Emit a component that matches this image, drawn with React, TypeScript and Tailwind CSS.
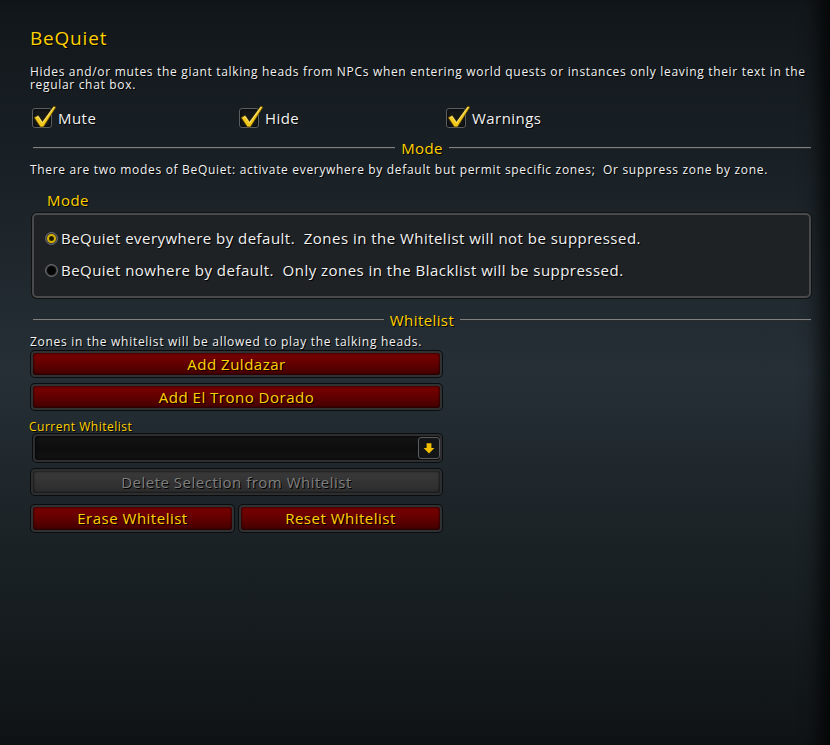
const body = { fontFamily: '"Open Sans", "DejaVu Sans", sans-serif' };
const shadow = '[text-shadow:1px_1px_0_#000]';

function Check() {
  return (
    <span className="relative inline-block w-[20px] h-[20px] rounded-[3px] border border-[#5b5e60] bg-[#141618] shadow-[inset_0_0_3px_#000]">
      <svg viewBox="0 0 24 24" className="absolute -left-[1px] -top-[5px] w-[25px] h-[25px]">
        <path d="M2 13 L6 11 L10 17 L21 2 L23 3 L11 22 L8 22 Z" fill="#f2c81a" stroke="#5a4300" strokeWidth="0.8" />
        <path d="M4 13 L6 12 L10 18 L21 3" fill="none" stroke="#fff0a0" strokeWidth="0.8" />
      </svg>
    </span>
  );
}

function Radio({ on }: { on?: boolean }) {
  return (
    <span className="inline-flex items-center justify-center w-[13px] h-[13px] rounded-full bg-[#3b3d3f] border border-[#6a6c6e]">
      {on ? (
        <span className="w-[9px] h-[9px] rounded-full border-[2px] border-[#d8b400] bg-[#2a2400] flex items-center justify-center">
          <span className="w-[3px] h-[3px] rounded-full bg-[#1a1600]" />
        </span>
      ) : (
        <span className="w-[9px] h-[9px] rounded-full bg-[#050505]" />
      )}
    </span>
  );
}

function Divider({ label }: { label: string }) {
  return (
    <div className="flex items-center h-[18px] ml-[3px] w-[778px] gap-[6px]">
      <div className="flex-1 h-[2px] bg-[#808080] border-b border-[#2a2a2a]" />
      <span className={`text-[15px] text-[#ffd100] leading-[18px] tracking-[0.4px] ${shadow}`}>{label}</span>
      <div className="flex-1 h-[2px] bg-[#808080] border-b border-[#2a2a2a]" />
    </div>
  );
}

function RedButton({ label, className }: { label: string; className?: string }) {
  return (
    <div className={`h-[26px] rounded-[4px] bg-[#2f3133] p-[2px] shadow-[0_0_0_1px_#0b0c0d] ${className ?? ''}`}>
      <div className="h-full rounded-[3px] bg-gradient-to-b from-[#7a0000] via-[#620000] to-[#420000] shadow-[inset_0_0_3px_#000] flex items-center justify-center">
        <span className={`text-[15px] text-[#ffd100] tracking-[0.5px] ${shadow}`}>{label}</span>
      </div>
    </div>
  );
}

export default function App() {
  return (
    <div
      style={body}
      className="w-[830px] h-[745px] overflow-hidden bg-gradient-to-b from-[#11161a] via-[#252f35] to-[#0f1315] shadow-[inset_-22px_0_18px_-12px_rgba(0,0,0,0.75)] text-[#f2f2f2]"
    >
      <div className="pl-[30px] pt-[26px] flex flex-col">
        <h1 className={`text-[19px] leading-[24px] text-[#ffd100] tracking-[0.8px] ${shadow}`}>BeQuiet</h1>
        <p className={`mt-[15px] text-[12px] leading-[13px] tracking-[0.68px] w-[790px] ${shadow}`}>
          Hides and/or mutes the giant talking heads from NPCs when entering world quests or instances only leaving their text in the regular chat box.
        </p>

        <div className="mt-[16px] flex h-[22px] items-center">
          {['Mute', 'Hide', 'Warnings'].map((t) => (
            <div key={t} className="w-[207px] flex items-center gap-[6px] pl-[2px]">
              <Check />
              <span className={`text-[15px] tracking-[0.45px] ${shadow}`}>{t}</span>
            </div>
          ))}
        </div>

        <div className="mt-[10px]">
          <Divider label="Mode" />
        </div>
        <p className={`mt-[6px] text-[12px] leading-[13px] tracking-[0.68px] ${shadow}`}>
          There are two modes of BeQuiet: activate everywhere by default but permit specific zones;&nbsp; Or suppress zone by zone.
        </p>

        <div className={`mt-[15px] ml-[17px] text-[15px] leading-[18px] text-[#ffd100] tracking-[0.45px] ${shadow}`}>Mode</div>
        <div className="mt-[4px] ml-[2px] w-[779px] h-[85px] rounded-[5px] border-[2px] border-[#48494b] bg-[#1f2225] shadow-[0_0_0_1px_#111] flex flex-col pl-[11px] pt-[14px] gap-[14px]">
          <div className="flex items-center gap-[3px] h-[18px]">
            <Radio on />
            <span className={`text-[15px] tracking-[0.47px] ${shadow}`}>BeQuiet everywhere by default.&nbsp; Zones in the Whitelist will not be suppressed.</span>
          </div>
          <div className="flex items-center gap-[3px] h-[18px]">
            <Radio />
            <span className={`text-[15px] tracking-[0.47px] ${shadow}`}>BeQuiet nowhere by default.&nbsp; Only zones in the Blacklist will be suppressed.</span>
          </div>
        </div>

        <div className="mt-[13px]">
          <Divider label="Whitelist" />
        </div>
        <p className={`mt-[6px] text-[12px] leading-[13px] tracking-[0.7px] ${shadow}`}>
          Zones in the whitelist will be allowed to play the talking heads.
        </p>

        <div className="ml-[1px] w-[411px] flex flex-col">
          <RedButton label="Add Zuldazar" className="mt-[3px]" />
          <RedButton label="Add El Trono Dorado" className="mt-[7px]" />

          <div className={`mt-[10px] -ml-[2px] text-[12px] leading-[13px] text-[#ffd100] tracking-[0.5px] ${shadow}`}>Current Whitelist</div>

          <div className="mt-[1px] ml-[2px] h-[28px] w-[409px] rounded-[4px] bg-[#2c2e30] p-[2px] shadow-[0_0_0_1px_#0b0c0d]">
            <div className="h-full rounded-[3px] bg-gradient-to-b from-[#161616] via-[#0d0d0d] to-[#141414] shadow-[inset_0_0_4px_#000] flex items-center justify-end pr-0">
              <div className="w-[22px] h-[22px] rounded-[3px] border border-[#5a5c5e] bg-[#141516] flex items-center justify-center">
                <svg viewBox="0 0 10 10" className="w-[12px] h-[12px]">
                  <path d="M3 1 H7 V5 H9.5 L5 9.5 L0.5 5 H3 Z" fill="#f2c000" />
                </svg>
              </div>
            </div>
          </div>

          <div className="mt-[7px] h-[26px] rounded-[4px] bg-[#2c2e30] p-[2px] shadow-[0_0_0_1px_#0b0c0d]">
            <div className="h-full rounded-[3px] bg-gradient-to-b from-[#3a3a3a] to-[#2c2c2c] shadow-[inset_0_0_3px_#000] flex items-center justify-center">
              <span className={`text-[15px] text-[#7f7f7f] tracking-[0.5px] ${shadow}`}>Delete Selection from Whitelist</span>
            </div>
          </div>

          <div className="mt-[10px] flex gap-[5px]">
            <RedButton label="Erase Whitelist" className="w-[203px] h-[27px]" />
            <RedButton label="Reset Whitelist" className="w-[203px] h-[27px]" />
          </div>
        </div>
      </div>
    </div>
  );
}
